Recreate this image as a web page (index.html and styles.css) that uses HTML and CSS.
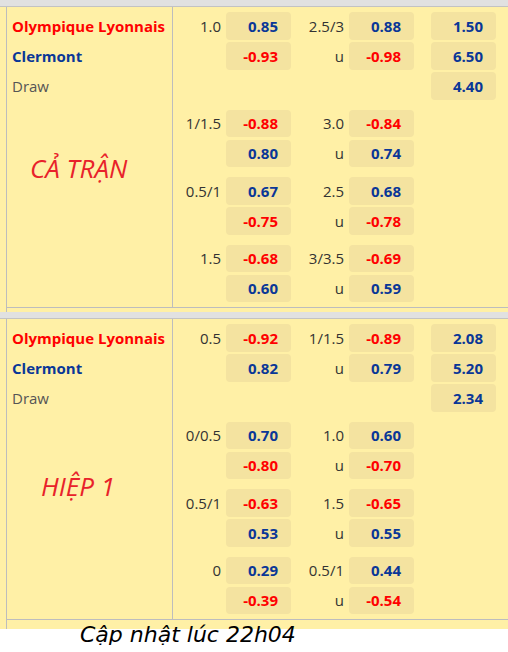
FILE: index.html
```html
<!DOCTYPE html>
<html lang="vi">
<head>
<meta charset="utf-8">
<title>Tỷ lệ kèo</title>
<link rel="stylesheet" href="styles.css">
</head>
<body>
<div class="page">
  <div class="bar"></div>
  <div class="frame">
    <div class="sec">
      <div class="teams">
        <div class="team home">Olympique Lyonnais</div>
        <div class="team away">Clermont</div>
        <div class="team draw">Draw</div>
      </div>
      <div class="grp main">
        <span class="lbl">1.0</span><span class="box pos">0.85</span><span class="lbl">2.5/3</span><span class="box pos">0.88</span><span></span><span class="box pos">1.50</span>
        <span class="lbl"></span><span class="box neg">-0.93</span><span class="lbl">u</span><span class="box neg">-0.98</span><span></span><span class="box pos">6.50</span>
        <span class="lbl"></span><span></span><span class="lbl"></span><span></span><span></span><span class="box pos">4.40</span>
      </div>
      <div class="caption c1">CẢ TRẬN</div>
      <div class="grps">
        <div class="grp">
          <span class="lbl">1/1.5</span><span class="box neg">-0.88</span><span class="lbl">3.0</span><span class="box neg">-0.84</span>
          <span class="lbl"></span><span class="box pos">0.80</span><span class="lbl">u</span><span class="box pos">0.74</span>
        </div>
        <div class="grp">
          <span class="lbl">0.5/1</span><span class="box pos">0.67</span><span class="lbl">2.5</span><span class="box pos">0.68</span>
          <span class="lbl"></span><span class="box neg">-0.75</span><span class="lbl">u</span><span class="box neg">-0.78</span>
        </div>
        <div class="grp">
          <span class="lbl">1.5</span><span class="box neg">-0.68</span><span class="lbl">3/3.5</span><span class="box neg">-0.69</span>
          <span class="lbl"></span><span class="box pos">0.60</span><span class="lbl">u</span><span class="box pos">0.59</span>
        </div>
      </div>
    </div>
  </div>
  <div class="gap"></div>
  <div class="bar"></div>
  <div class="frame">
    <div class="sec">
      <div class="teams">
        <div class="team home">Olympique Lyonnais</div>
        <div class="team away">Clermont</div>
        <div class="team draw">Draw</div>
      </div>
      <div class="grp main">
        <span class="lbl">0.5</span><span class="box neg">-0.92</span><span class="lbl">1/1.5</span><span class="box neg">-0.89</span><span></span><span class="box pos">2.08</span>
        <span class="lbl"></span><span class="box pos">0.82</span><span class="lbl">u</span><span class="box pos">0.79</span><span></span><span class="box pos">5.20</span>
        <span class="lbl"></span><span></span><span class="lbl"></span><span></span><span></span><span class="box pos">2.34</span>
      </div>
      <div class="caption c2">HIỆP 1</div>
      <div class="grps">
        <div class="grp">
          <span class="lbl">0/0.5</span><span class="box pos">0.70</span><span class="lbl">1.0</span><span class="box pos">0.60</span>
          <span class="lbl"></span><span class="box neg">-0.80</span><span class="lbl">u</span><span class="box neg">-0.70</span>
        </div>
        <div class="grp">
          <span class="lbl">0.5/1</span><span class="box neg">-0.63</span><span class="lbl">1.5</span><span class="box neg">-0.65</span>
          <span class="lbl"></span><span class="box pos">0.53</span><span class="lbl">u</span><span class="box pos">0.55</span>
        </div>
        <div class="grp">
          <span class="lbl">0</span><span class="box pos">0.29</span><span class="lbl">0.5/1</span><span class="box pos">0.44</span>
          <span class="lbl"></span><span class="box neg">-0.39</span><span class="lbl">u</span><span class="box neg">-0.54</span>
        </div>
      </div>
    </div>
  </div>
  <div class="tail"></div>
</div>
<div class="update">Cập nhật lúc 22h04</div>
</body>
</html>
```

FILE: styles.css
```css
html, body {
  margin: 0;
  padding: 0;
  background: #ffffff;
  overflow: hidden;
}

body {
  font-family: "Open Sans", "Noto Sans", sans-serif;
  font-size: 15px;
  color: #333;
}

.page {
  background: #fff0a6;
}

.bar {
  height: 6px;
  background: #e1e1e1;
  border-bottom: 1px solid #c3c3c3;
}

.frame {
  margin-left: 6px;
  border-left: 1px solid #bdbdbd;
  border-bottom: 1px solid #bdbdbd;
}

.gap {
  height: 4px;
  margin-left: 6px;
  border-left: 1px solid #bdbdbd;
}

.tail {
  height: 9px;
  margin-left: 6px;
  border-left: 1px solid #bdbdbd;
}

.sec {
  display: grid;
  grid-template-columns: 166px 1fr;
}

.teams,
.caption {
  border-right: 1px solid #bdbdbd;
}

.teams {
  display: grid;
  grid-auto-rows: 27.5px;
  row-gap: 2.5px;
  padding: 5px 0;
}

.team {
  display: flex;
  align-items: center;
  padding-left: 5px;
  white-space: nowrap;
}

.home { color: #ff0000; font-weight: 700; }
.away { color: #0a3797; font-weight: 700; }
.draw { color: #555; }

.grp {
  display: grid;
  grid-template-columns: 53px 65px 58px 65px 17px 65px;
  grid-auto-rows: 27.5px;
  row-gap: 2.5px;
  padding: 5px 0;
}

.grps .grp {
  grid-template-columns: 53px 65px 58px 65px;
}

.lbl {
  display: flex;
  align-items: center;
  justify-content: flex-end;
  padding-right: 5px;
  color: #333;
}

.box {
  display: flex;
  align-items: center;
  justify-content: flex-end;
  padding-right: 13px;
  background: #f4e3a0;
  border-radius: 4px;
  font-weight: 700;
}

.pos { color: #0a3797; }
.neg { color: #ff0000; }

.caption {
  font-family: "Open Sans", sans-serif;
  font-style: italic;
  font-size: 26px;
  color: #e8222a;
  padding-left: 23px;
}

.c1 { padding-top: 45px; }
.c2 { padding-top: 51px; padding-left: 34px; }

.update {
  font-family: "DejaVu Sans", sans-serif;
  font-style: italic;
  font-size: 22px;
  color: #000;
  padding-left: 80px;
  line-height: 20px;
  margin-top: -4px;
}
```
